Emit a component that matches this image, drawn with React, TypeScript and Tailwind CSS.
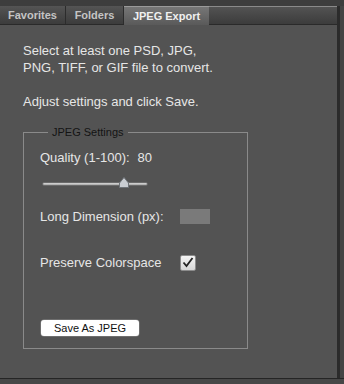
const tabs = [
  { label: "Favorites", w: "w-[66px]", active: false },
  { label: "Folders", w: "w-[58px]", active: false },
  { label: "JPEG Export", w: "w-[85px]", active: true },
];

const Slider = () => {
  return (
    <div className="relative mt-[12px] ml-[2px] h-[12px] w-[106px]">
      <div className="absolute left-0 right-0 top-[4px] h-[4px] rounded-full border border-[#6a6a6a] bg-gradient-to-b from-[#d8d8d8] to-[#a8a8a8]" />
      <svg className="absolute left-[77px] top-[-1px]" width="10" height="11" viewBox="0 0 10 11">
        <path d="M5 0.5 L9.5 6 L9.5 10.5 L0.5 10.5 L0.5 6 Z" fill="#c9cdd2" stroke="#6e7378" strokeWidth="1" />
      </svg>
    </div>
  );
};

const App = () => {
  return (
    <div
      className="flex h-[384px] w-[344px] flex-col bg-[#474747] text-[13px] text-[#e6e6e6]"
      style={{ fontFamily: '"Liberation Sans", Arial, sans-serif' }}
    >
      <div className="h-[6px] bg-[#3d3d3d]" />
      <div className="flex flex-1">
        <div className="flex flex-1 flex-col">
          <div className="flex h-[19px] border-b border-[#2a2a2a] bg-gradient-to-b from-[#545454] to-[#3c3c3c]">
            {tabs.map((t) =>
              t.active ? (
                <div
                  key={t.label}
                  className={`${t.w} -mb-px flex items-center justify-center border-t border-[#9a9a9a] bg-gradient-to-b from-[#767676] to-[#5a5a5a] text-[11px] font-bold text-[#f0f0f0]`}
                >
                  {t.label}
                </div>
              ) : (
                <div
                  key={t.label}
                  className={`${t.w} flex items-center justify-center border-r border-[#2c2c2c] text-[11px] font-bold text-[#c4c4c4]`}
                >
                  {t.label}
                </div>
              )
            )}
            <div className="flex-1 border-t border-[#8a8a8a]" />
          </div>
          <div className="flex flex-1 flex-col bg-[#535353] pl-[23px] pt-[17px] leading-[17px]">
            <p>Select at least one PSD, JPG,</p>
            <p>PNG, TIFF, or GIF file to convert.</p>
            <p className="mt-[17px]">Adjust settings and click Save.</p>

            <fieldset className="mt-[16px] h-[223px] w-[225px] border border-[#8a8a8a] pl-[16px]">
              <legend className="ml-[8px] px-[4px] text-[11px] leading-[13px] text-[#141414]">JPEG Settings</legend>
              <div className="mt-[10px] flex">
                <span>Quality (1-100):</span>
                <span className="ml-[8px]">80</span>
              </div>
              <Slider />
              <div className="mt-[18px] flex items-center">
                <span className="w-[140px]">Long Dimension (px):</span>
                <div className="h-[15px] w-[30px] bg-[#7a7a7a]" />
              </div>
              <div className="mt-[29px] flex items-center">
                <span className="w-[140px]">Preserve Colorspace</span>
                <div className="flex h-[16px] w-[16px] items-center justify-center rounded-[2px] border border-[#8c8c8c] bg-gradient-to-b from-[#f4f4f4] to-[#d6d6d6]">
                  <svg width="12" height="11" viewBox="0 0 12 11">
                    <path d="M1.5 5.5 L4.5 9 L10.5 1" fill="none" stroke="#222" strokeWidth="1.8" />
                  </svg>
                </div>
              </div>
              <button className="mt-[49px] ml-[1px] h-[16px] w-[98px] rounded-[3px] bg-white text-[11px] leading-[16px] text-[#111] shadow-[0_0_0_0.5px_#8a8a8a]">
                Save As JPEG
              </button>
            </fieldset>
            <div className="flex-1" />
          </div>
        </div>
        <div className="w-[7px] border-l-[3px] border-[#2b2b2b] bg-[#444]" />
      </div>
      <div className="h-[6px] border-t border-[#252525] bg-[#474747]" />
    </div>
  );
};

export default App;
